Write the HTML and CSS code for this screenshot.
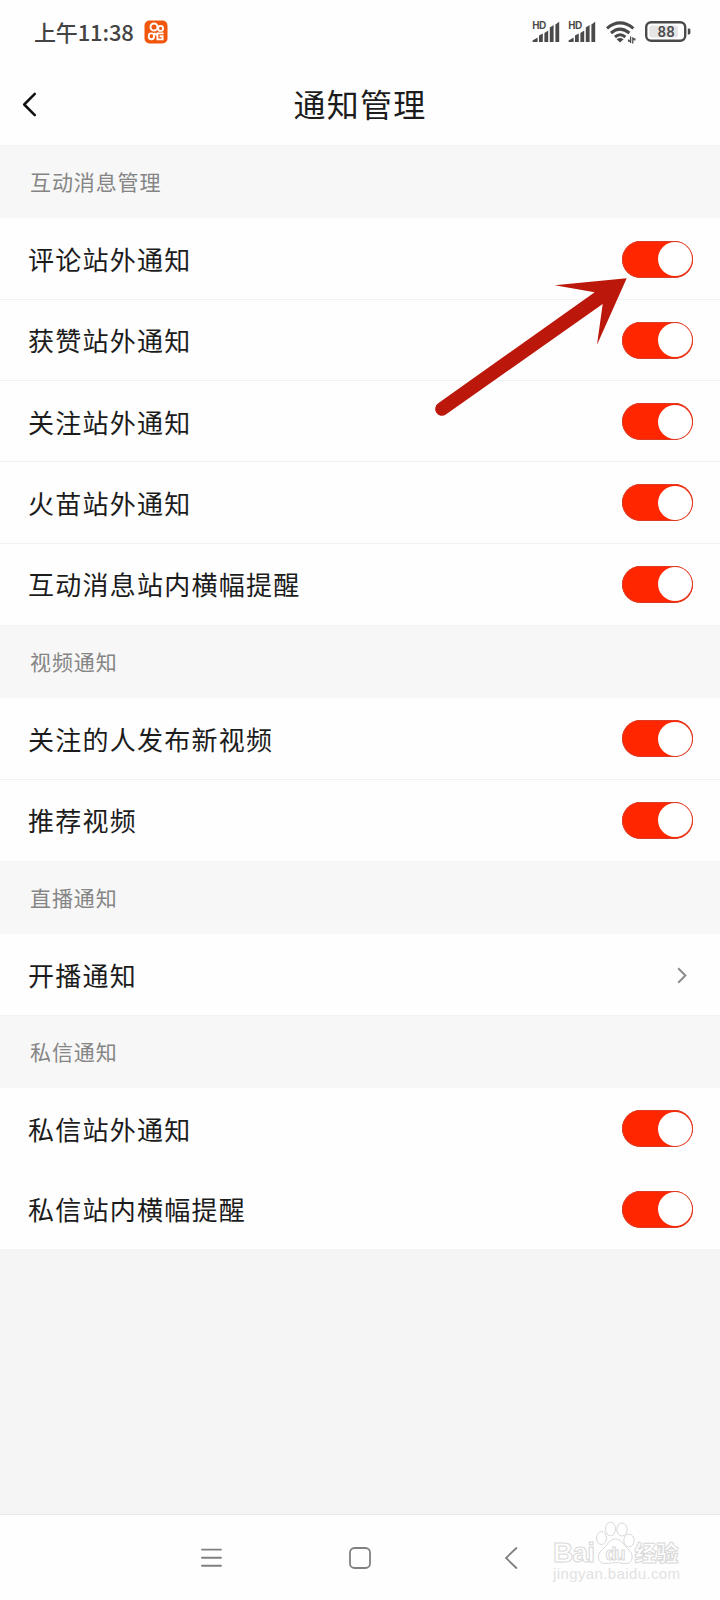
FILE: index.html
```html
<!DOCTYPE html>
<html lang="zh-CN">
<head>
  <meta charset="UTF-8" />
  <meta name="viewport" content="width=device-width, initial-scale=1.0"/>
  <title>通知管理</title>
  <link rel="stylesheet" href="styles.css">
</head>
<body>

  <div class="status-bar">
    <span class="clock">上午11:38</span>
    <svg class="app-icon" width="24" height="24" viewBox="0 0 24 24">
      <rect x="0.5" y="0.5" width="23" height="23" rx="5" fill="#f0570c"/>
      <g fill="none" stroke="#fff" stroke-width="1.9">
        <circle cx="10" cy="7" r="3.5"/>
        <circle cx="16.6" cy="8.4" r="2.5"/>
        <rect x="4.8" y="13.4" width="5.2" height="5.8" rx="2.4"/>
        <path d="M9.8 13.2l3.6 2.2v-2h6.2M13.4 15.4v4h5.2v-3.2h-3"/>
      </g>
    </svg>
    <div class="status-icons">
      <svg width="28" height="22" viewBox="0 0 28 22">
        <text class="hd" x="0.2" y="8.4" textLength="14">HD</text>
        <path class="bars" d="M0.6 21v-1.6l5-3V21zM7 21v-6.4l3.8-2V21zM12.4 21v-9l3.8-2.4V21zM17.8 21V6.6l3.8-2.6V21zM23.4 21V3.4l3.8-2.6V21z"/>
      </svg>
      <svg width="28" height="22" viewBox="0 0 28 22">
        <text class="hd" x="0.2" y="8.4" textLength="14">HD</text>
        <path class="bars" d="M0.6 21v-1.6l5-3V21zM7 21v-6.4l3.8-2V21zM12.4 21v-9l3.8-2.4V21zM17.8 21V6.6l3.8-2.6V21zM23.4 21V3.4l3.8-2.6V21z"/>
      </svg>
      <svg class="wifi" width="29" height="23" viewBox="0 0 29 23">
        <g fill="none" stroke="#4a4a4a" stroke-width="3">
          <path d="M1 7.4Q14 -3.6 27.4 7.4"/>
          <path d="M5 12Q14 4.2 23.4 12"/>
          <path d="M9 16Q14 11.6 19.4 16"/>
        </g>
        <path d="M10.6 18.2Q14 15.8 17.6 18.2L14.1 21.4z" fill="#4a4a4a"/>
        <path d="M24.6 15.6v6.4M22.6 18.4v1.6h2M26.8 16.2v6.4M26.8 18h2v1.6" fill="none" stroke="#4a4a4a" stroke-width="1.3"/>
      </svg>
      <svg class="battery" width="46" height="22" viewBox="0 0 46 22">
        <rect x="1.2" y="1.2" width="39" height="18.6" rx="5" fill="#fff" stroke="#4a4a4a" stroke-width="2.4"/>
        <rect x="4.5" y="4.5" width="28.5" height="12" rx="2" fill="#e6e6e6"/>
        <path d="M42.8 7.6h1.2q1.4 0 1.4 1.4v3q0 1.4-1.4 1.4h-1.2z" fill="#4a4a4a"/>
        <text class="level" x="12.4" y="16" textLength="17.5">88</text>
      </svg>
    </div>
  </div>

  <div class="header">
    <svg class="back" width="15" height="25" viewBox="0 0 15 25">
      <path d="M12.8 1.8L2.2 12.5 12.8 23.2" fill="none" stroke="#111" stroke-width="2.5" stroke-linecap="round" stroke-linejoin="round"/>
    </svg>
    <h1>通知管理</h1>
  </div>

  <div class="settings">
    <div class="section-title">互动消息管理</div>
    <div class="group">
      <div class="row"><span>评论站外通知</span><i class="switch"></i></div>
      <div class="row"><span>获赞站外通知</span><i class="switch"></i></div>
      <div class="row"><span>关注站外通知</span><i class="switch"></i></div>
      <div class="row"><span>火苗站外通知</span><i class="switch"></i></div>
      <div class="row"><span>互动消息站内横幅提醒</span><i class="switch"></i></div>
    </div>

    <div class="section-title">视频通知</div>
    <div class="group">
      <div class="row"><span>关注的人发布新视频</span><i class="switch"></i></div>
      <div class="row"><span>推荐视频</span><i class="switch"></i></div>
    </div>

    <div class="section-title">直播通知</div>
    <div class="group plain">
      <div class="row">
        <span>开播通知</span>
        <svg class="chevron" width="10" height="17" viewBox="0 0 10 17">
          <path d="M1.2 1.3L8.4 8.5 1.2 15.7" fill="none" stroke="#8c8c8c" stroke-width="2"/>
        </svg>
      </div>
    </div>

    <div class="section-title">私信通知</div>
    <div class="group plain">
      <div class="row"><span>私信站外通知</span><i class="switch"></i></div>
      <div class="row"><span>私信站内横幅提醒</span><i class="switch"></i></div>
    </div>
  </div>

  <div class="nav-bar">
    <svg width="22" height="22" viewBox="0 0 22 22">
      <path d="M2 2.6h19M2 10.7h19M2 18.7h19" stroke="#808080" stroke-width="1.9" stroke-linecap="round"/>
    </svg>
    <svg width="22" height="22" viewBox="0 0 22 22">
      <rect x="1" y="1" width="20" height="20" rx="4.5" fill="none" stroke="#808080" stroke-width="1.8"/>
    </svg>
    <svg width="22" height="22" viewBox="0 0 22 22">
      <path d="M16.4 1L6 11 16.4 21" fill="none" stroke="#808080" stroke-width="1.8" stroke-linecap="round"/>
    </svg>
  </div>

  <!-- pointer to the first switch -->
  <svg class="arrow" width="192" height="142" viewBox="0 0 192 142">
    <path d="M190.7 3.3L118.7 10.3 158.7 17.3 2.2 128.3A6.8 6.8 0 0 0 9.8 139.6L166.7 29 161 69.7z" fill="#bc170b"/>
  </svg>

  <svg class="watermark" width="132" height="66" viewBox="0 0 132 66">
    <g fill="#fff" stroke="#d9d9d9" stroke-width="1">
      <text class="wm-latin" x="2" y="42" textLength="42">Bai</text>
      <path d="M64.5 19C58 19 56 26 51 30C45 35 47 43.5 54 43.5C59 43.5 60 42.5 64.5 42.5S71 43.5 75 43.5C82 43.5 83 35 78 30C73 26 71 19 64.5 19z"/>
      <ellipse cx="50.5" cy="18" rx="5" ry="6.5"/>
      <ellipse cx="59.5" cy="9" rx="5" ry="6.8"/>
      <ellipse cx="71" cy="9.5" rx="5.2" ry="6.5"/>
      <ellipse cx="78" cy="20.5" rx="5.2" ry="6.3"/>
      <text class="wm-du" x="54.5" y="39.5" textLength="20">du</text>
      <text class="wm-cn" x="83.5" y="41" textLength="44">经验</text>
    </g>
    <text class="wm-url" x="2" y="58.5" textLength="127">jingyan.baidu.com</text>
  </svg>

</body>
</html>
```
FILE: styles.css
```css
:root {
  --text-color: #1c1c1c;
  --muted: #858585;
  --panel-bg: #f7f7f7;
  --line: #f1f1f1;
  --accent: #ff2600;
}

* {
  box-sizing: border-box;
}

body {
  margin: 0;
  width: 720px;
  height: 1600px;
  display: flex;
  flex-direction: column;
  position: relative;
  overflow: hidden;
  background: #fefefe;
  color: var(--text-color);
  font-family: "Noto Sans CJK SC", sans-serif;
}

svg {
  display: block;
  flex: none;
  overflow: visible;
}

/* Status bar */
.status-bar {
  height: 64px;
  padding: 0 29px 0 34px;
  display: flex;
  align-items: center;
}

.clock {
  width: 110px;
  padding-bottom: 2px;
  font-size: 22px;
  font-weight: 500;
  line-height: 30px;
  letter-spacing: -0.15px;
  white-space: nowrap;
  color: #444;
}

.status-icons {
  margin-left: auto;
  display: flex;
  align-items: center;
}

.status-icons svg {
  margin-right: 8px;
}

.status-icons .wifi {
  margin: 1px 10px 0 2px;
}

.status-icons .battery {
  margin-right: 0;
}

.bars {
  fill: #4a4a4a;
}

.hd {
  font: 700 10px "Liberation Sans", sans-serif;
  fill: #4a4a4a;
}

.level {
  font: 500 15px Roboto, sans-serif;
  fill: #4a4a4a;
}

/* Title bar */
.header {
  height: 81px;
  display: grid;
  grid-template-columns: 60px 1fr 60px;
  align-items: center;
}

.back {
  margin-left: 22px;
}

.header h1 {
  margin: 0;
  padding-bottom: 3px;
  font-size: 32px;
  font-weight: 400;
  line-height: 44px;
  letter-spacing: 1.3px;
  text-align: center;
}

/* Settings list */
.settings {
  flex: 1;
  background: #f5f5f5;
}

.section-title {
  height: 73.4px;
  padding: 0 30px 2px;
  display: flex;
  align-items: center;
  background: var(--panel-bg);
  border-top: 1px solid #f3f3f3;
  font-size: 21px;
  letter-spacing: 0.9px;
  color: var(--muted);
}

.group {
  background: #fefefe;
}

.row {
  height: 81.3px;
  padding: 1px 27px 0 28px;
  display: flex;
  align-items: center;
  justify-content: space-between;
  border-bottom: 1px solid var(--line);
  font-size: 26px;
  letter-spacing: 1.25px;
}

.row span {
  padding-bottom: 1px;
}

.row:last-child {
  border-bottom-color: transparent;
}

.plain .row {
  height: 80.5px;
  border-bottom: none;
}

.switch {
  width: 71px;
  height: 37px;
  padding: 1.5px;
  display: flex;
  justify-content: flex-end;
  border-radius: 19px;
  background: var(--accent);
  box-shadow: inset 0 0 0 1px #dc3c26;
}

.switch::after {
  content: "";
  width: 34px;
  height: 34px;
  border-radius: 50%;
  background: #fff;
}

.chevron {
  margin-right: 6px;
}

/* System navigation */
.nav-bar {
  height: 86px;
  padding: 0 198px 0 200px;
  display: flex;
  align-items: center;
  justify-content: space-between;
  background: #fefefe;
  border-top: 1px solid #e9e9e9;
}

.nav-bar svg:nth-child(2) {
  margin-right: 2px;
}

/* Overlays */
.arrow {
  position: absolute;
  left: 436px;
  top: 275px;
}

.watermark {
  position: absolute;
  left: 551px;
  top: 1520px;
}

.wm-latin {
  font: 700 28px "Liberation Sans", sans-serif;
}

.wm-du {
  font: 700 18px "Liberation Sans", sans-serif;
}

.wm-cn {
  font: 900 22px "Noto Sans CJK SC", sans-serif;
}

.wm-url {
  font: 400 15px "Liberation Sans", sans-serif;
  fill: #e2e2e2;
}
```
